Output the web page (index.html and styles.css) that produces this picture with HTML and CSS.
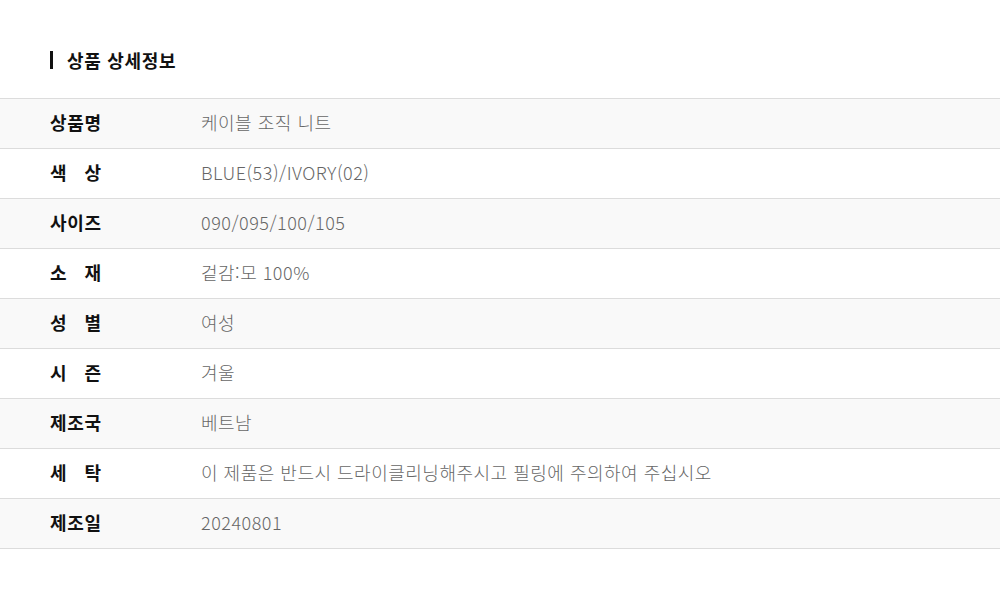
FILE: index.html
```html
<!DOCTYPE html>
<html lang="ko">
<head>
<meta charset="utf-8">
<link rel="stylesheet" href="styles.css">
</head>
<body>
<section class="detail">
  <h2 class="title">상품 상세정보</h2>
  <div class="table">
    <div class="row alt"><div class="label"><span>상</span><span>품</span><span>명</span></div><div class="value">케이블 조직 니트</div></div>
    <div class="row"><div class="label"><span>색</span><span>상</span></div><div class="value">BLUE(53)/IVORY(02)</div></div>
    <div class="row alt"><div class="label"><span>사</span><span>이</span><span>즈</span></div><div class="value">090/095/100/105</div></div>
    <div class="row"><div class="label"><span>소</span><span>재</span></div><div class="value">겉감:모 100%</div></div>
    <div class="row alt"><div class="label"><span>성</span><span>별</span></div><div class="value">여성</div></div>
    <div class="row"><div class="label"><span>시</span><span>즌</span></div><div class="value">겨울</div></div>
    <div class="row alt"><div class="label"><span>제</span><span>조</span><span>국</span></div><div class="value">베트남</div></div>
    <div class="row"><div class="label"><span>세</span><span>탁</span></div><div class="value">이 제품은 반드시 드라이클리닝해주시고 필링에 주의하여 주십시오</div></div>
    <div class="row alt"><div class="label"><span>제</span><span>조</span><span>일</span></div><div class="value">20240801</div></div>
  </div>
</section>
</body>
</html>
```
FILE: styles.css
```css
html, body {
  margin: 0;
  padding: 0;
  background: #fff;
}
body {
  font-family: "Noto Sans CJK KR", "Noto Sans", sans-serif;
  width: 1000px;
  height: 598px;
  overflow: hidden;
}
.detail {
  padding-top: 46px;
}
.title {
  margin: 0 0 0 50px;
  height: 28px;
  display: flex;
  align-items: center;
  font-size: 18px;
  font-weight: 700;
  letter-spacing: 0.7px;
  color: #111;
  line-height: 28px;
}
.title::before {
  content: "";
  width: 3px;
  height: 18px;
  background: #111;
  margin-right: 14px;
}
.table {
  margin-top: 24px;
  border-top: 1px solid #dcdcdc;
}
.row {
  display: flex;
  align-items: center;
  box-sizing: border-box;
  height: 50px;
  padding-bottom: 3px;
  border-bottom: 1px solid #dcdcdc;
}
.row.alt {
  background: #f9f9f9;
}
.label {
  width: 51px;
  margin-left: 50px;
  display: flex;
  justify-content: space-between;
  font-size: 18px;
  font-weight: 700;
  color: #111;
}
.value {
  margin-left: 100px;
  font-size: 18px;
  color: #666;
  letter-spacing: 0.5px;
  font-weight: 300;
}
```
